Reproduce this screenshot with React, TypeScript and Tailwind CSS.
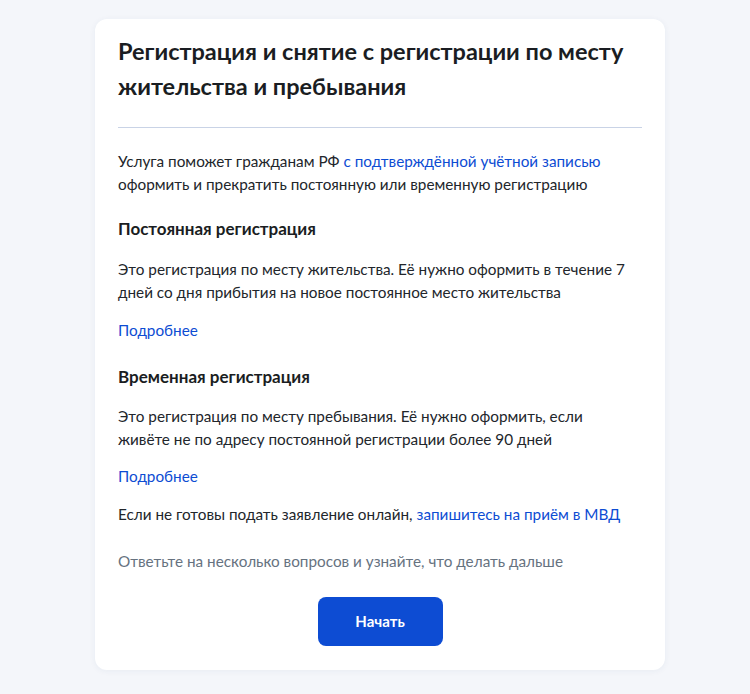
import React from "react";

export default function App() {
  return (
    <div className="min-h-[694px] bg-[#f4f6fa] pl-[95px] pt-[19px] pb-[25px]" style={{ fontFamily: "Lato, 'Noto Sans', sans-serif" }}>
      <div className="w-[570px] rounded-[12px] bg-white px-[23px] pt-[15px] pb-[24px] shadow-[0_1px_6px_rgba(30,60,120,0.06)]">
        <h1 className="text-[23.5px] leading-[35px] font-bold text-[#1a1d22]">
          Регистрация и снятие с регистрации по месту жительства и пребывания
        </h1>
        <div className="mt-[23px] h-px bg-[#c9d3e6]" />
        <p className="mt-[22px] text-[15.3px] leading-[23px] text-[#22262b]">
          Услуга поможет гражданам РФ <span className="text-[#0d4cd3]">с подтверждённой учётной записью</span> оформить и прекратить постоянную или временную регистрацию
        </p>
        <h2 className="mt-[21px] text-[17px] leading-[24px] font-bold text-[#1a1d22]">Постоянная регистрация</h2>
        <p className="mt-[17px] text-[15.3px] leading-[23px] text-[#22262b]">
          Это регистрация по месту жительства. Её нужно оформить в течение 7 дней со дня прибытия на новое постоянное место жительства
        </p>
        <p className="mt-[15px] text-[15.3px] leading-[23px] text-[#0d4cd3]">Подробнее</p>
        <h2 className="mt-[23px] text-[17px] leading-[24px] font-bold text-[#1a1d22]">Временная регистрация</h2>
        <p className="mt-[16px] max-w-[505px] text-[15.3px] leading-[23px] text-[#22262b]">
          Это регистрация по месту пребывания. Её нужно оформить, если живёте не по адресу постоянной регистрации более 90 дней
        </p>
        <p className="mt-[14px] text-[15.3px] leading-[23px] text-[#0d4cd3]">Подробнее</p>
        <p className="mt-[15px] text-[15.3px] leading-[23px] text-[#22262b]">
          Если не готовы подать заявление онлайн, <span className="text-[#0d4cd3]">запишитесь на приём в МВД</span>
        </p>
        <p className="mt-[24px] text-[15.3px] leading-[23px] text-[#66727f]">Ответьте на несколько вопросов и узнайте, что делать дальше</p>
        <div className="mt-[24px] flex justify-center">
          <button className="h-[49px] w-[125px] rounded-[8px] bg-[#0d4cd3] text-[15px] font-bold text-white">Начать</button>
        </div>
      </div>
    </div>
  );
}
